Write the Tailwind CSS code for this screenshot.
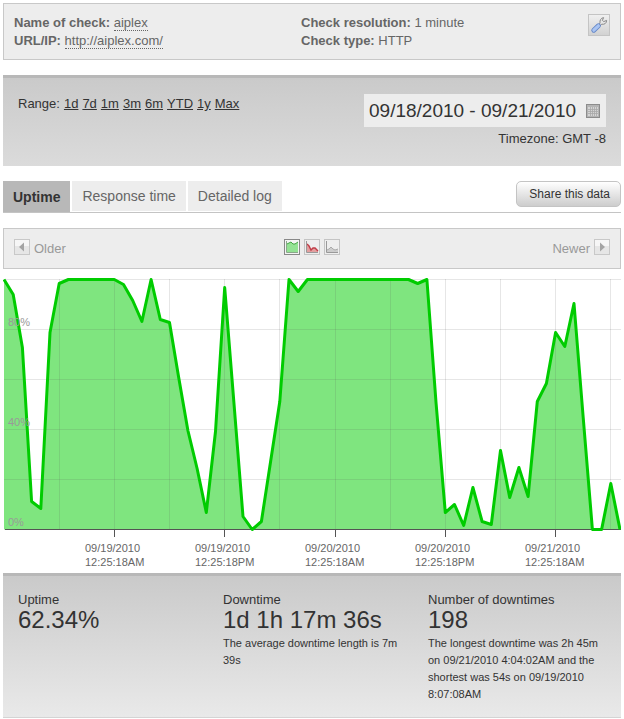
<!DOCTYPE html>
<html lang="en">
  <head>
    <meta charset="UTF-8" />
    <title>Uptime report | aiplex</title>
    <meta name="viewport" content="width=device-width, initial-scale=1.0" />
    <script src="https://cdn.jsdelivr.net/npm/@tailwindcss/browser@4"></script>
  </head>

  <body
    class="bg-white px-[3px] pt-[3px] font-['Liberation_Sans',Arial,sans-serif] text-[13px] leading-[18px] text-[#333]"
  >
    <!-- Check details -->
    <header
      class="flex items-start border border-[#c8c8c8] bg-[#ededed] px-[10px] pt-[10px] pb-[9px] text-[#666]"
    >
      <div class="w-[287px]">
        <p>
          <b>Name of check:</b>
          <a href="#" class="border-b border-dotted border-[#666]">aiplex</a>
        </p>
        <p>
          <b>URL/IP:</b>
          <a href="#" class="border-b border-dotted border-[#666]">http://aiplex.com/</a>
        </p>
      </div>
      <div class="flex-1">
        <p><b>Check resolution:</b> 1 minute</p>
        <p><b>Check type:</b> HTTP</p>
      </div>
      <button
        type="button"
        aria-label="Edit check"
        class="flex size-[22px] items-center justify-center border border-[#c4c4c4] bg-linear-to-b from-[#f0f0f0] to-[#d2d2d2]"
      >
        <svg viewBox="0 0 18 18" class="size-[18px]" fill="none" stroke-linecap="round">
          <path
            d="M9 8.6 L10 7 C9.6 4.4 10.8 2 13.6 1.6 L12.4 4.4 L13.8 5.6 L16.6 4.4 C16.8 7 14.4 8.8 11.8 8.2 L10.2 9.6 Z"
            fill="#e6e6e6" stroke="#8a8a8a" stroke-linejoin="round"
          />
          <path d="M3.8 14.2 L8.4 9.8" stroke="#6688c8" stroke-width="5" />
          <path d="M3.8 14.2 L8.4 9.8" stroke="#a9c4f2" stroke-width="3.2" />
        </svg>
      </button>
    </header>

    <!-- Range and period -->
    <section
      class="mt-[15px] flex h-[91px] items-start justify-between border-t-[3px] border-[#b8b8b8] bg-linear-to-b from-[#cacaca] to-[#dbdbdb] px-[15px] pt-4"
    >
      <nav class="flex gap-1 pt-[1px]">
        <span>Range:</span>
        <a href="#" class="underline">1d</a>
        <a href="#" class="underline">7d</a>
        <a href="#" class="underline">1m</a>
        <a href="#" class="underline">3m</a>
        <a href="#" class="underline">6m</a>
        <a href="#" class="underline">YTD</a>
        <a href="#" class="underline">1y</a>
        <a href="#" class="underline">Max</a>
      </nav>
      <div class="text-right">
        <button
          type="button"
          class="flex h-[33px] w-[242px] items-center justify-between bg-[#ededed] pr-[6px] pl-[5px] text-[19px]"
        >
          <span>09/18/2010 - 09/21/2010</span>
          <svg viewBox="0 0 14 14" class="size-[14px]">
            <rect x=".5" y=".5" width="13" height="13" fill="#b4b4b4" stroke="#8c8c8c" />
            <rect x="2" y="3" width="10" height="9" fill="#d4d4d4" />
            <path
              d="M2 5.5H12M2 7.5H12M2 9.5H12M4.5 3V12M6.5 3V12M8.5 3V12M10.5 3V12"
              stroke="#a8a8a8" stroke-width=".8"
            />
          </svg>
        </button>
        <p class="mt-[3px]">Timezone: GMT -8</p>
      </div>
    </section>

    <!-- Tabs -->
    <div class="mt-[15px] flex h-8 items-start justify-between border-b border-[#c4c4c4]">
      <nav class="flex gap-[2px] text-sm text-[#666]">
        <a href="#" class="flex h-[31px] items-center bg-[#b8b8b8] px-[10px] font-bold text-[#333]">Uptime</a>
        <a href="#" class="flex h-[30px] items-center bg-[#ededed] px-[10px]">Response time</a>
        <a href="#" class="flex h-[30px] items-center bg-[#ededed] px-[10px]">Detailed log</a>
      </nav>
      <button
        type="button"
        class="h-[26px] rounded-[5px] border border-[#c4c4c4] bg-linear-to-b from-white to-[#cdcdcd] pr-[10px] pl-3 text-xs"
      >
        Share this data
      </button>
    </div>

    <!-- Chart toolbar -->
    <div
      class="mt-[15px] grid h-[41px] grid-cols-3 items-center border border-[#c8c8c8] bg-[#ededed] px-[10px] text-[#999]"
    >
      <button type="button" class="flex items-center gap-1 justify-self-start">
        <svg viewBox="0 0 16 16" class="-mt-[3px] size-4">
          <rect x=".5" y=".5" width="15" height="15" fill="#e6e6e6" stroke="#c8c8c8" />
          <rect x="1" y="1" width="14" height="6" fill="#f6f6f6" />
          <path d="M10 3.5V12.5L5 8Z" fill="#a4a4a4" />
        </svg>
        Older
      </button>
      <div class="-mt-[3px] flex gap-1 justify-self-center">
        <button type="button" aria-label="Area chart">
          <svg viewBox="0 0 16 16" class="size-4">
            <rect x=".5" y=".5" width="15" height="15" fill="#f4f4f4" stroke="#888" />
            <path d="M3 5L5 4L7 3L9 5L11 5L14 3V14H3Z" fill="#93e293" />
            <path d="M3 5L5 4L7 3L9 5L11 5L14 3" fill="none" stroke="#45a545" />
            <path d="M2.5 2V13.5H14" fill="none" stroke="#8aa88a" />
          </svg>
        </button>
        <button type="button" aria-label="Downtime chart">
          <svg viewBox="0 0 16 16" class="size-4">
            <rect x=".5" y=".5" width="15" height="15" fill="#eee" stroke="#c4c4c4" />
            <path d="M3 6L5 7L7 11L9 9L11 9L14 12V14H3Z" fill="#e3a0a0" />
            <path d="M3 5L5 7L7 11L9 9L11 9L14 12" fill="none" stroke="#c03c48" stroke-width="1.4" />
            <path d="M2.5 2V13.5H14" fill="none" stroke="#999" />
          </svg>
        </button>
        <button type="button" aria-label="Response chart">
          <svg viewBox="0 0 16 16" class="size-4">
            <rect x=".5" y=".5" width="15" height="15" fill="#eee" stroke="#c4c4c4" />
            <path d="M3 11L5 10L7 8L9 10L11 11L14 10V14H3Z" fill="#ccc" />
            <path d="M3 11L5 10L7 8L9 10L11 11L14 10" fill="none" stroke="#aaa" />
            <path d="M2.5 2V13.5H14" fill="none" stroke="#999" />
          </svg>
        </button>
      </div>
      <button type="button" class="flex items-center gap-1 justify-self-end">
        Newer
        <svg viewBox="0 0 16 16" class="-mt-[3px] size-4">
          <rect x=".5" y=".5" width="15" height="15" fill="#e6e6e6" stroke="#c8c8c8" />
          <rect x="1" y="1" width="14" height="6" fill="#f6f6f6" />
          <path d="M6 3.5V12.5L11 8Z" fill="#a4a4a4" />
        </svg>
      </button>
    </div>

    <!-- Uptime chart -->
    <figure class="relative mt-2">
      <svg viewBox="0 0 618 262" preserveAspectRatio="none" class="block h-[262px] w-full">
        <path id="area" fill="#00cc00" fill-opacity=".5" />
        <path
          d="M1 2.5H618M1 52.5H618M1 102.5H618M1 152.5H618M1 202.5H618M56.5 2V252M111.5 2V252M166.5 2V252M221.5 2V252M276.5 2V252M332.5 2V252M387.5 2V252M442.5 2V252M497.5 2V252M552.5 2V252M607.5 2V252"
          stroke="#545454" stroke-opacity=".15"
        />
        <path
          d="M2 252.5H618M111.5 252V260M221.5 252V260M332.5 252V260M442.5 252V260M552.5 252V260"
          stroke="#545454"
        />
        <path id="line" fill="none" stroke="#0c0" stroke-width="3" stroke-linejoin="round" />
      </svg>
      <span class="absolute top-[38px] left-[5px] text-[11px] leading-[14px] text-[#999]">80%</span>
      <span class="absolute top-[138px] left-[5px] text-[11px] leading-[14px] text-[#999]">40%</span>
      <span class="absolute top-[238px] left-[5px] text-[11px] leading-[14px] text-[#999]">0%</span>
      <figcaption
        class="-mr-[14px] ml-[82px] grid grid-cols-5 pt-[2px] pb-1 text-[11px] leading-[14px] text-[#666]"
      >
        <span>09/19/2010<br />12:25:18AM</span>
        <span>09/19/2010<br />12:25:18PM</span>
        <span>09/20/2010<br />12:25:18AM</span>
        <span>09/20/2010<br />12:25:18PM</span>
        <span>09/21/2010<br />12:25:18AM</span>
      </figcaption>
    </figure>

    <!-- Summary -->
    <section
      class="grid min-h-[145px] grid-cols-3 gap-3 border-t-[3px] border-b border-t-[#b8b8b8] border-b-[#d4d4d4] bg-linear-to-b from-[#cacaca] to-[#e9e9e9] pt-[15px] pb-3 pl-[15px]"
    >
      <div>
        <h2>Uptime</h2>
        <p class="text-2xl leading-[22px]">62.34%</p>
      </div>
      <div>
        <h2>Downtime</h2>
        <p class="text-2xl leading-[22px]">1d 1h 17m 36s</p>
        <p class="mt-1 pr-4 text-[11px] leading-[17px]">The average downtime length is 7m 39s</p>
      </div>
      <div>
        <h2>Number of downtimes</h2>
        <p class="text-2xl leading-[22px]">198</p>
        <p class="mt-1 pr-4 text-[11px] leading-[17px]">
          The longest downtime was 2h 45m on 09/21/2010 4:04:02AM and the shortest was 54s on
          09/19/2010 8:07:08AM
        </p>
      </div>
    </section>

    <script>
      // downtime per hour, 0 = fully up, 250 = fully down
      const down = [
        0, 15, 68, 222, 229, 53, 4, 0, 0, 0, 0, 0, 0, 5, 21, 42, 0, 40, 43, 98,
        151, 189, 233, 152, 8, 123, 237, 250, 242, 182, 122, 0, 12, 0, 0, 0, 0,
        0, 0, 0, 0, 0, 0, 0, 0, 4, 0, 124, 233, 225, 246, 208, 242, 245, 171,
        218, 188, 217, 122, 104, 53, 67, 24, 138, 250, 250, 204, 250,
      ];
      const step = 616 / (down.length - 1);
      const points = down.map((y, i) => `${(1 + i * step).toFixed(1)} ${y + 2.5}`);
      const d = "M" + points.join("L");

      document.getElementById("line").setAttribute("d", d);
      document.getElementById("area").setAttribute("d", d + "V252.5H1Z");
    </script>
  </body>
</html>
